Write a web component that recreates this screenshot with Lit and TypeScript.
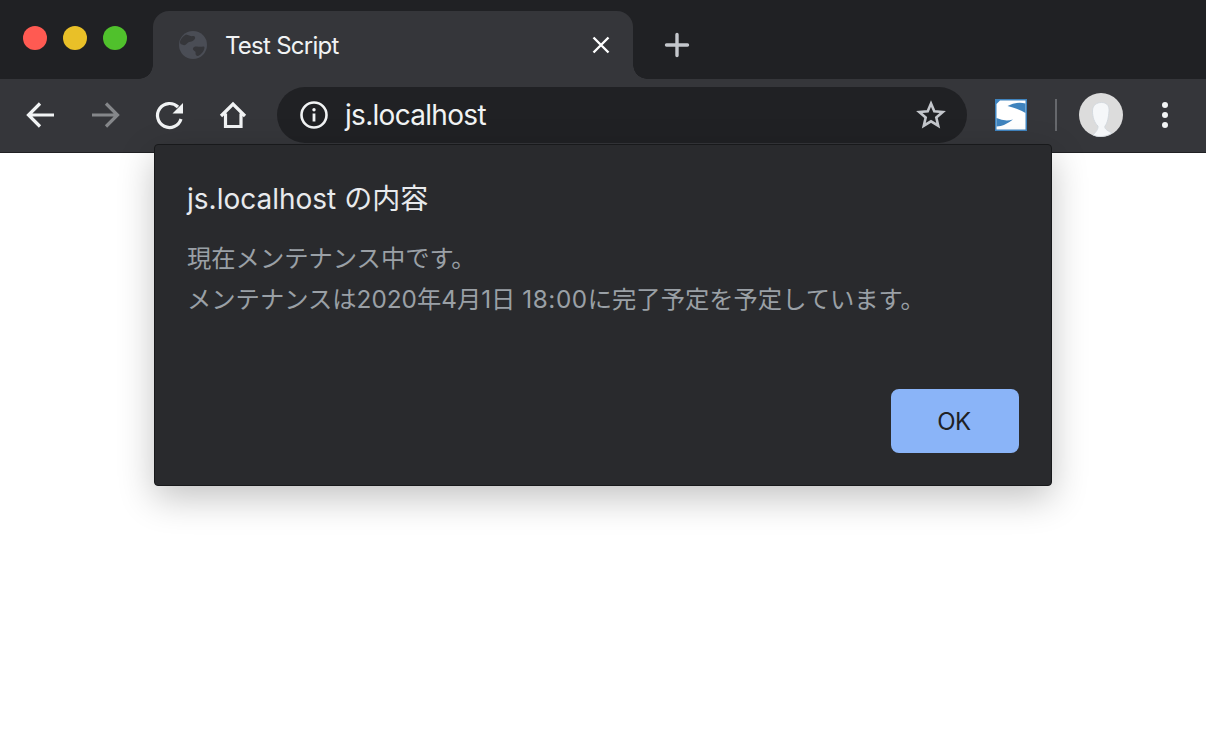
import { LitElement, html, css } from "lit";
import { customElement } from "lit/decorators.js";

@customElement("app-root")
export class AppRoot extends LitElement {
  static styles = css`
    :host {
      display: block;
      position: relative;
      width: 1206px;
      height: 740px;
      overflow: hidden;
      background: #fff;
      font-family: Inter, "Noto Sans CJK JP", sans-serif;
    }
    svg { display: block; flex: none; }
    .strip {
      height: 79px;
      background: #202124;
      display: flex;
      align-items: flex-start;
    }
    .lights {
      width: 153px;
      height: 79px;
      flex: none;
      box-sizing: border-box;
      padding: 26px 0 0 23px;
      display: flex;
      gap: 16px;
    }
    .light { width: 24px; height: 24px; border-radius: 50%; }
    .red { background: #ff5a52; }
    .yellow { background: #e9c028; }
    .green { background: #50c12c; }
    .tab {
      position: relative;
      margin-top: 11px;
      width: 480px;
      height: 68px;
      flex: none;
      box-sizing: border-box;
      background: #35363a;
      border-radius: 16px 16px 0 0;
      display: flex;
      align-items: center;
      padding: 0 22px 0 25px;
      color: #f1f3f4;
      font-size: 24px;
      letter-spacing: -0.75px;
    }
    .tab::before, .tab::after {
      content: "";
      position: absolute;
      bottom: 0;
      width: 14px;
      height: 14px;
    }
    .tab::before {
      left: -14px;
      background: radial-gradient(circle at 0 0, transparent 13.5px, #35363a 14px);
    }
    .tab::after {
      right: -14px;
      background: radial-gradient(circle at 100% 0, transparent 13.5px, #35363a 14px);
    }
    .tab-title { margin-left: 17px; flex: 1; white-space: nowrap; }
    .plus { margin: 32px 0 0 31px; }
    .toolbar {
      height: 74px;
      background: #35363a;
      border-bottom: 1px solid #202124;
      display: flex;
      align-items: center;
      box-sizing: border-box;
      padding: 0 0 1px 21px;
    }
    .nav { display: flex; align-items: center; gap: 24px; width: 256px; flex: none; }
    .omni {
      width: 690px;
      height: 56px;
      flex: none;
      box-sizing: border-box;
      border-radius: 28px;
      background: #202124;
      display: flex;
      align-items: center;
      padding: 0 21px 0 23px;
      color: #f1f3f4;
      font-size: 28px;
      letter-spacing: -0.7px;
    }
    .url { margin-left: 17px; flex: 1; }
    .ext { margin-left: 28px; }
    .sep { width: 2px; height: 32px; background: #66686c; margin: 0 22px 0 28px; flex: none; }
    .menu { margin-left: 36px; }
    .dialog {
      position: absolute;
      left: 154px;
      top: 144px;
      width: 898px;
      height: 342px;
      box-sizing: border-box;
      background: #292a2d;
      border: 1px solid #18191b;
      border-radius: 4px;
      box-shadow: 0 12px 36px rgba(0, 0, 0, 0.24);
      padding: 36px 32px 32px 32px;
      display: flex;
      flex-direction: column;
    }
    .title { color: #e8eaed; font-size: 28px; line-height: 36px; }
    .body { color: #9aa0a6; font-size: 24.3px; line-height: 41px; margin-top: 21px; flex: 1; white-space: nowrap; }
    .digits { letter-spacing: 0.6px; }
    .actions { display: flex; justify-content: flex-end; }
    .ok {
      width: 128px;
      height: 64px;
      border: 0;
      border-radius: 8px;
      background: #8ab4f8;
      color: #202124;
      font: inherit;
      font-size: 24px;
      letter-spacing: -0.6px;
      padding: 0 2px 0 0;
    }
  `;

  render() {
    const ink = "#f1f3f4";
    return html`
      <div class="strip">
        <div class="lights">
          <div class="light red"></div>
          <div class="light yellow"></div>
          <div class="light green"></div>
        </div>
        <div class="tab">
          <svg width="30" height="30" viewBox="0 0 30 30">
            <circle cx="15" cy="15" r="14" fill="#4a4d55" />
            <path d="M8 4.5c3 1 5 2 7 1.500s3 2 1 4-3 1.500-5 2-3 4-5.500 3-3.500-1-3.500-3 3-6 6-7.500z" fill="#35363a" />
            <path d="M16 17c3-1.500 6 .5 9-.5s1 5-2 7.500-4 2.500-5 1 .5-3-1.500-4-2-3-.5-4z" fill="#35363a" />
          </svg>
          <span class="tab-title">Test Script</span>
          <svg width="20" height="20" viewBox="0 0 20 20">
            <path d="M2.5 2.5l15 15M17.5 2.5l-15 15" stroke="#fff" stroke-width="2.4" fill="none" />
          </svg>
        </div>
        <svg class="plus" width="26" height="26" viewBox="0 0 26 26">
          <path d="M13 2.5v21M2.5 13h21" stroke="#c4c7cc" stroke-width="3.4" stroke-linecap="round" fill="none" />
        </svg>
      </div>
      <div class="toolbar">
        <div class="nav">
          <svg width="40" height="40" viewBox="0 0 40 40">
            <path d="M33 20H8M19 8.5L7.5 20 19 31.5" stroke="${ink}" stroke-width="3.2" fill="none" />
          </svg>
          <svg width="40" height="40" viewBox="0 0 40 40">
            <path d="M7 20h25M21 8.5L32.5 20 21 31.5" stroke="#85878a" stroke-width="3.2" fill="none" />
          </svg>
          <svg width="40" height="40" viewBox="0 0 40 40">
            <path d="M32 24A12 12 0 1 1 29 12" stroke="${ink}" stroke-width="3.2" fill="none" />
            <path d="M34 8v10.5H23.5z" fill="${ink}" />
          </svg>
          <svg width="40" height="40" viewBox="0 0 40 40">
            <path d="M8 21L20 9l12 12M12.5 18.5v13h15.5v-13" stroke="${ink}" stroke-width="3.2" fill="none" />
          </svg>
        </div>
        <div class="omni">
          <svg width="28" height="28" viewBox="0 0 28 28">
            <circle cx="14" cy="14" r="12.5" stroke="${ink}" stroke-width="2.6" fill="none" />
            <path d="M14 12.5v8" stroke="${ink}" stroke-width="2.8" />
            <circle cx="14" cy="8.8" r="1.7" fill="${ink}" />
          </svg>
          <span class="url">js.localhost</span>
          <svg width="30" height="30" viewBox="0 0 30 30">
            <path d="M15 3.5l3.3 7.800 8.400.7-6.400 5.500 1.900 8.200-7.200-4.400-7.200 4.400 1.900-8.200-6.400-5.500 8.400-.7z" stroke="#c4c7cc" stroke-width="2.6" fill="none" />
          </svg>
        </div>
        <svg class="ext" width="32" height="32" viewBox="0 0 32 32">
          <rect width="32" height="32" fill="#3f83bd" />
          <path d="M5 1.5H30.5V30.5H1.5V5z" fill="#fff" />
          <path d="M12.5 7Q22 2 30.5 4.5V14Q22 9 12.5 7z" fill="#3f83bd" />
          <path d="M1.5 19Q10 23 18 20.5Q10 27 1.5 27.500z" fill="#3f83bd" />
        </svg>
        <div class="sep"></div>
        <svg width="44" height="44" viewBox="0 0 44 44">
          <circle cx="22" cy="22" r="22" fill="#dcdcdc" />
          <path d="M13.5 18C13.5 12 18 9.5 22.5 9.5C27 9.5 30.5 12 30 18C29.5 24 28.5 30 26 33C25 35 27 37 33 40C28 43.5 20 45 14 42C17 39 19.5 36 19 33C15.5 30 13.5 24 13.5 18z" fill="#f5f7f9" stroke="#cfd6dc" stroke-width="0.8" />
        </svg>
        <svg class="menu" width="12" height="32" viewBox="0 0 12 32">
          <circle cx="6" cy="6" r="3" fill="${ink}" />
          <circle cx="6" cy="16" r="3" fill="${ink}" />
          <circle cx="6" cy="26" r="3" fill="${ink}" />
        </svg>
      </div>
      <div class="dialog">
        <div class="title">js.localhost の内容</div>
        <div class="body">現在メンテナンス中です。<br />メンテナンスは2020年4月1日 <span class="digits">18:00</span>に完了予定を予定しています。</div>
        <div class="actions"><button class="ok">OK</button></div>
      </div>
    `;
  }
}
